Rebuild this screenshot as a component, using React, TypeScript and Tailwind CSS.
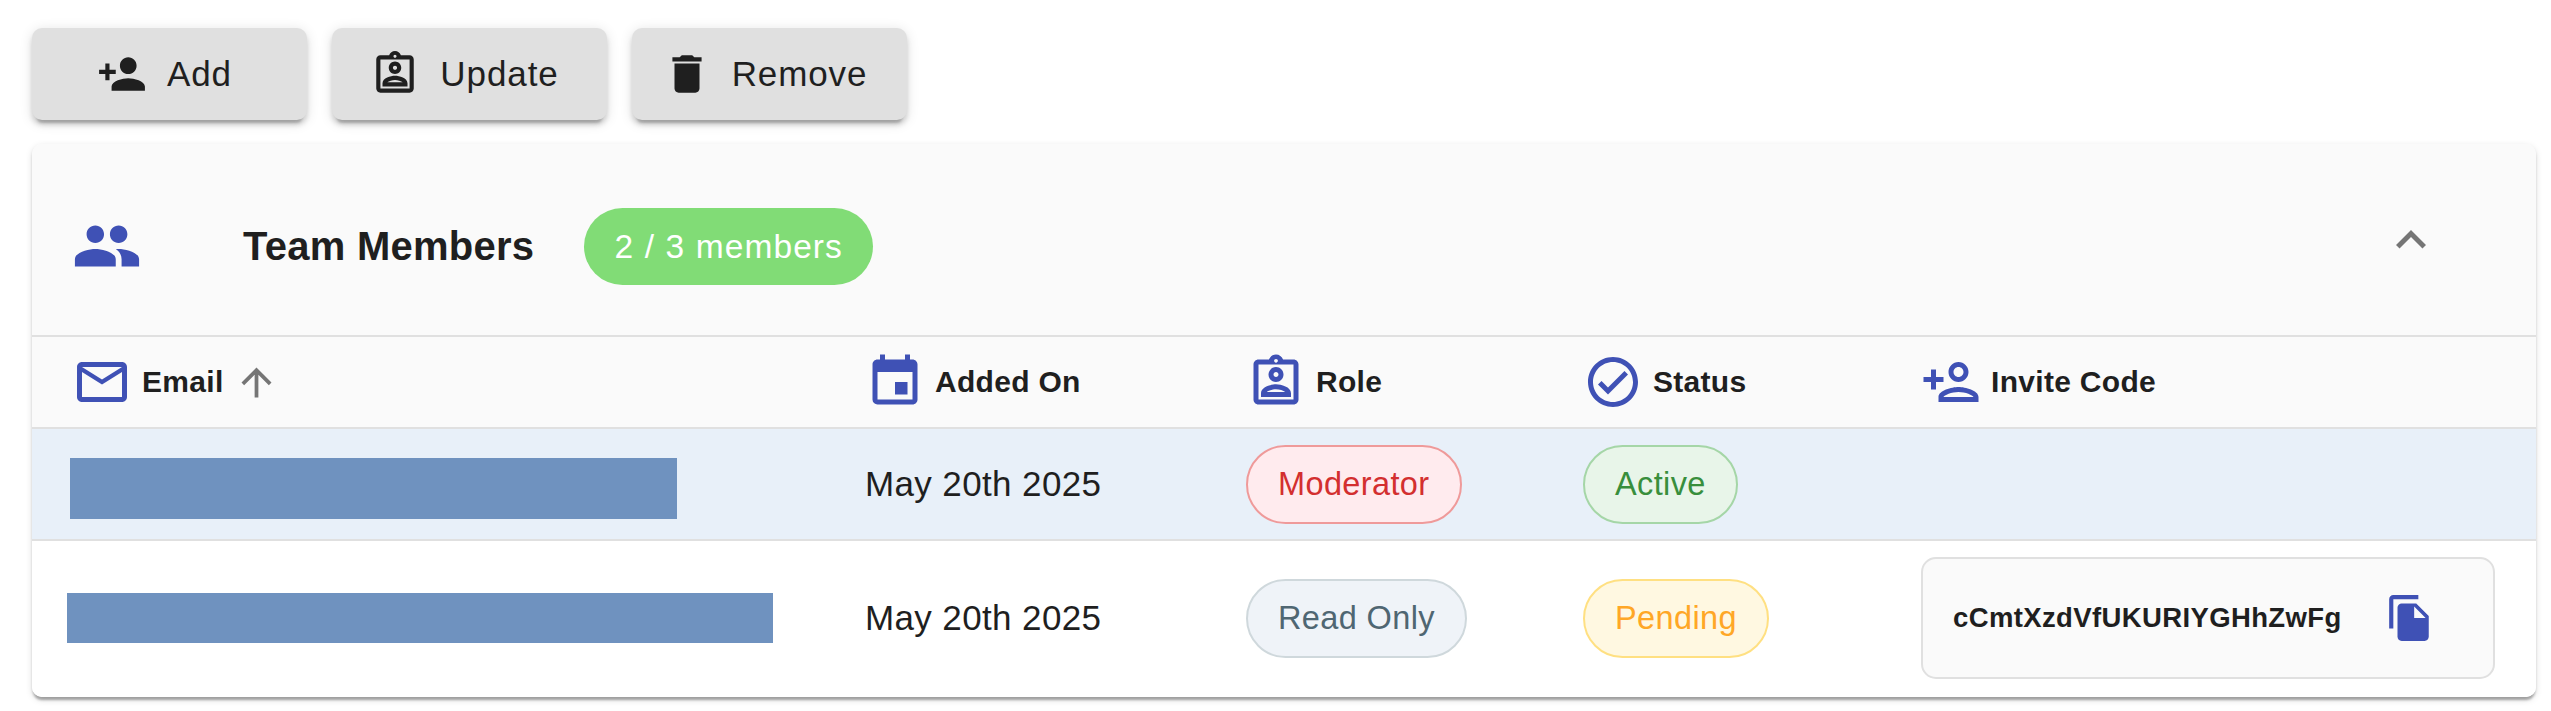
import type { ReactNode } from 'react';
import {
  MdArrowUpward,
  MdDelete,
  MdEvent,
  MdExpandLess,
  MdFileCopy,
  MdMailOutline,
  MdOutlineAssignmentInd,
  MdOutlineCheckCircle,
  MdOutlinePersonAdd,
  MdPeople,
  MdPersonAdd,
} from 'react-icons/md';

const rowGrid = 'grid grid-cols-[833px_381px_337px_338px_1fr] items-center';

function ActionButton({ icon, label }: { icon: ReactNode; label: string }) {
  return (
    <button className="flex h-[92px] w-[275px] items-center justify-center gap-[20px] rounded-[10px] bg-[#e0e0e0] pr-[10px] text-[35px] tracking-[0.9px] text-[#1f1f1f] shadow-[0_7.5px_2.5px_-5px_rgba(0,0,0,0.2),0_5px_5px_0_rgba(0,0,0,0.14),0_2.5px_12.5px_0_rgba(0,0,0,0.12)]">
      {icon}
      {label}
    </button>
  );
}

function HeadCell({ icon, label }: { icon: ReactNode; label: string }) {
  return (
    <div className="flex items-center gap-[10px] text-[30px] font-bold tracking-[0.3px] text-[#1f1f1f]">
      {icon}
      <span className="pb-[2px]">{label}</span>
    </div>
  );
}

function Pill({ label, className }: { label: string; className: string }) {
  return (
    <span className={`inline-flex h-[79px] items-center rounded-[40px] border-[2.5px] px-[30px] text-[32.5px] ${className}`}>
      {label}
    </span>
  );
}

export default function App() {
  return (
    <div className="h-[711px] bg-white px-[32px] pt-[28px] font-['Liberation_Sans',Arial,sans-serif] tracking-[0.375px]">
      <div className="flex gap-[25px]">
        <ActionButton icon={<MdPersonAdd size={50} />} label="Add" />
        <ActionButton icon={<MdOutlineAssignmentInd size={50} />} label="Update" />
        <ActionButton icon={<MdDelete size={50} />} label="Remove" />
      </div>

      <div className="mt-[24px] w-[2504px] overflow-hidden rounded-[10px] bg-white shadow-[0_5px_2.5px_-2.5px_rgba(0,0,0,0.2),0_2.5px_2.5px_0_rgba(0,0,0,0.14),0_2.5px_7.5px_0_rgba(0,0,0,0.12)]">
        <div className="flex h-[193px] items-center border-b-[2.5px] border-[#e0e0e0] bg-[#fafafa] pl-[40px] pr-[95px]">
          <div className="flex flex-1 items-center pt-[13px]">
            <MdPeople size={70} className="text-[#3f51b5]" />
            <span className="ml-[101px] text-[40px] font-bold tracking-[0.25px] text-[#1f1f1f]">Team Members</span>
            <span className="ml-[50px] flex h-[77px] w-[289px] items-center justify-center rounded-[40px] bg-[#81dc76] pt-[3px] text-[33.5px] tracking-[1.1px] text-white">
              2 / 3 members
            </span>
          </div>
          <MdExpandLess size={60} className="mt-[1px] text-[#757575]" />
        </div>

        <div className={`${rowGrid} h-[92px] border-b-[2.5px] border-[#e0e0e0] bg-[#fafafa]`}>
          <div className="flex items-center gap-[10px] pl-[40px]">
            <HeadCell icon={<MdMailOutline size={60} className="text-[#3f51b5]" />} label="Email" />
            <MdArrowUpward size={45} className="text-[#757575]" />
          </div>
          <HeadCell icon={<MdEvent size={60} className="text-[#3f51b5]" />} label="Added On" />
          <HeadCell icon={<MdOutlineAssignmentInd size={60} className="text-[#3f51b5]" />} label="Role" />
          <HeadCell icon={<MdOutlineCheckCircle size={60} className="text-[#3f51b5]" />} label="Status" />
          <HeadCell icon={<MdOutlinePersonAdd size={60} className="text-[#3f51b5]" />} label="Invite Code" />
        </div>

        <div className={`${rowGrid} h-[112px] border-b-[2.5px] border-[#e0e0e0] bg-[#e8f0f9]`}>
          <div className="pl-[38px] pt-[8px]">
            <div className="h-[61px] w-[607px] bg-[#6f92bf]" />
          </div>
          <span className="text-[35px] text-[#1f1f1f]">May 20th 2025</span>
          <div>
            <Pill label="Moderator" className="border-[#ef9a9a] bg-[#ffebee] text-[#d32f2f]" />
          </div>
          <div>
            <Pill label="Active" className="border-[#a5d6a7] bg-[#e8f5e9] text-[#388e3c]" />
          </div>
          <div />
        </div>

        <div className={`${rowGrid} h-[156px] bg-white pb-[2px]`}>
          <div className="pl-[35px]">
            <div className="h-[50px] w-[706px] bg-[#6f92bf]" />
          </div>
          <span className="text-[35px] text-[#1f1f1f]">May 20th 2025</span>
          <div>
            <Pill label="Read Only" className="border-[#cfd8dc] bg-[#eff3f8] text-[#4f6672]" />
          </div>
          <div>
            <Pill label="Pending" className="border-[#ffe082] bg-[#fff8e1] text-[#ffa726]" />
          </div>
          <div className="flex h-[122px] w-[574px] items-center rounded-[15px] border-[2.5px] border-[#e0e0e0] bg-[#fafafa] pl-[30px]">
            <span className="text-[27.5px] font-bold text-[#1f1f1f]">cCmtXzdVfUKURIYGHhZwFg</span>
            <MdFileCopy size={50} className="ml-[43px] text-[#3f51b5]" />
          </div>
        </div>
      </div>
    </div>
  );
}
